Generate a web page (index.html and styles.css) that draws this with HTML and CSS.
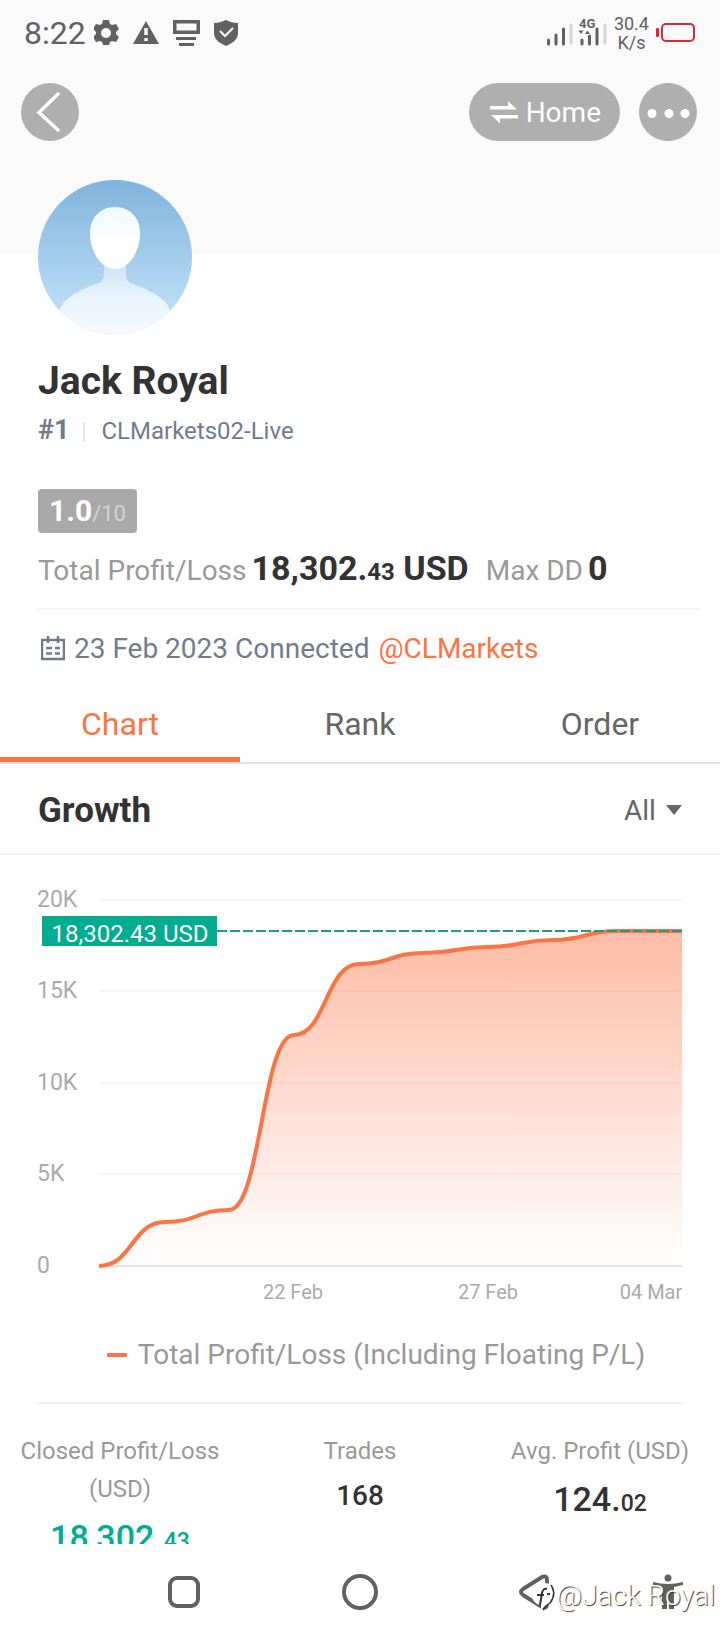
FILE: index.html
```html
<!DOCTYPE html>
<html lang="en">
  <head>
    <meta charset="utf-8">
    <meta name="viewport" content="width=device-width, initial-scale=1">
    <title>Jack Royal</title>
    <link rel="stylesheet" href="styles.css">
  </head>
  <body>
    <main class="screen">
      <header class="cover">
        <div class="status-bar">
          <span class="clock">8:22</span>
          <svg class="status-icons" width="146" height="28" viewBox="0 0 146 28">
            <g fill="#616161">
              <path fill-rule="evenodd" d="M9 1h6l1 4 2 1 4-1 3 5-3 3v2l3 3-3 5-4-1-2 1-1 3H9l-1-3-2-1-4 1-3-5 3-3v-2l-3-3 3-5 4 1 2-1zM12 9a4.500 4.500 0 1 0 0 10 4.500 4.500 0 0 0 0-10z"/>
              <path d="M52 2l13 23H39z"/>
              <path fill-rule="evenodd" d="M79 1h27v14H79zM82.500 4.500v7h20v-7z"/>
              <path d="M82 18h20v3H82zM85 24h15v3H85z"/>
              <path d="M132 1c4 2 8 3 12 3v10c0 6-5 10-12 13-7-3-12-7-12-13V4c4 0 8-1 12-3z"/>
            </g>
            <path d="M52 9v7M52 19v3" stroke="#fafafa" stroke-width="3.500"/>
            <path d="M126 12l5 5 8-8" fill="none" stroke="#fafafa" stroke-width="2"/>
          </svg>
          <svg class="signal" width="62" height="38" viewBox="0 -4 62 38">
            <path d="M3.500 22v4M11 17v9M18.500 11v15M37 22v4M44.500 18v8M52 11v15" stroke="#616161" stroke-width="3" stroke-linecap="round"/>
            <path d="M26 7v18M60 7v18" stroke="#d5d5d5" stroke-width="3" stroke-linecap="round"/>
            <path d="M33.500 12.500h5l-2.500 3.500zM40 16h5l-2.500-3.500z" fill="#616161"/>
            <text class="network" x="34" y="10">4G</text>
          </svg>
          <span class="speed">30.4<br>K/s</span>
          <svg width="40" height="20" viewBox="0 0 40 20">
            <rect x="6" y="1" width="32" height="17" rx="4" fill="none" stroke="#d92b31" stroke-width="2"/>
            <rect x="0" y="5" width="3" height="9" rx="1" fill="#e8202a"/>
          </svg>
        </div>
        <nav class="top-nav">
          <button class="pill round" aria-label="Back">
            <svg width="58" height="58" viewBox="0 0 58 58"><path d="M37 11L18 29.500 37 47" fill="none" stroke="#fff" stroke-width="3.500" stroke-linecap="round"/></svg>
          </button>
          <button class="pill home">
            <svg width="28" height="24" viewBox="0 0 28 24"><path d="M0 9.500V6h18V1l9 8.500zM28 15v3.500H10v5L1 15z" fill="#fff"/></svg>
            Home
          </button>
          <button class="pill round" aria-label="More">
            <svg width="58" height="58" viewBox="0 0 58 58" fill="#fff"><circle cx="13" cy="30.500" r="4.500"/><circle cx="30" cy="30.500" r="4.500"/><circle cx="46" cy="30.500" r="4.500"/></svg>
          </button>
        </nav>
      </header>

      <section class="profile">
        <svg class="avatar" width="154" height="154" viewBox="0 0 154 154">
          <defs>
            <linearGradient id="sky" x1="0" y1="0" x2="0" y2="1"><stop offset="0" stop-color="#80b3dc"/><stop offset="0.800" stop-color="#b9dcf4"/></linearGradient>
            <linearGradient id="face" x1="0" y1="0" x2="0" y2="1"><stop offset="0" stop-color="#eff9ff"/><stop offset="0.600" stop-color="#fff"/></linearGradient>
            <linearGradient id="body" x1="0" y1="0" x2="0" y2="1"><stop offset="0" stop-color="#cbe3f7"/><stop offset="0.500" stop-color="#e9f4fe"/><stop offset="1" stop-color="#f5faff"/></linearGradient>
            <clipPath id="disc"><circle cx="77" cy="77" r="77"/></clipPath>
          </defs>
          <g clip-path="url(#disc)">
            <path d="M0 0h154v154H0z" fill="url(#sky)"/>
            <path d="M66 82h22v10c0 8 1 10 7 12 22 8 36 17 37 28v22H21v-22c2-11 15-20 37-28 6-2 8-4 8-12z" fill="url(#body)"/>
            <path d="M77 27c15 0 25 11 25 26 0 20-12 36-25 36S52 73 52 53c0-15 10-26 25-26z" fill="url(#face)"/>
          </g>
        </svg>
        <h1 class="name">Jack Royal</h1>
        <p class="account"><b class="rank">#1</b><span class="server">CLMarkets02-Live</span></p>
        <p class="score"><b>1.0</b><small>/10</small></p>
        <p class="totals">
          <span>Total Profit/Loss</span>
          <b class="amount">18,302.<small>43</small> USD</b>
          <span class="drawdown">Max DD</span>
          <b class="amount">0</b>
        </p>
        <p class="connected">
          <svg width="24" height="26" viewBox="0 0 24 26" fill="none" stroke="#6f7b8a" stroke-width="2">
            <path d="M1 4h22v19H1z" stroke-width="2.500"/><path d="M7 0v7M17 0v7" stroke-width="2.500"/><path d="M5 12h6M14 12h5M5 17.500h6M14 17.500h5" stroke-width="2.500"/>
          </svg>
          <span>23 Feb 2023 Connected</span>
          <a href="#broker">@CLMarkets</a>
        </p>
      </section>

      <div class="tabs" role="tablist">
        <button class="tab active" role="tab" aria-selected="true">Chart</button>
        <button class="tab" role="tab" aria-selected="false">Rank</button>
        <button class="tab" role="tab" aria-selected="false">Order</button>
      </div>

      <section>
        <div class="chart-head">
          <h2>Growth</h2>
          <div class="period">
            <select aria-label="Period"><option>All</option></select>
            <svg width="16" height="10" viewBox="0 0 16 10"><path d="M0 0h16L8 10z" fill="#666"/></svg>
          </div>
        </div>
        <svg class="chart" viewBox="0 0 720 460" role="img" aria-label="Total profit/loss growth">
          <defs>
            <linearGradient id="fill" x1="0" y1="76" x2="0" y2="411" gradientUnits="userSpaceOnUse"><stop offset="0" stop-color="#fc7344" stop-opacity="0.480"/><stop offset="1" stop-color="#fc7344" stop-opacity="0"/></linearGradient>
          </defs>
          <path d="M100 45h582M100 136h582M100 228h582M100 319h582" stroke="#f6f6f6" stroke-width="2"/>
          <path d="M100 411h582" stroke="#e2e2e2" stroke-width="2"/>
          <path d="M100 411C132 411 132 367 165 367C197 367 197 355 229 355C261 355 262 180 294 180C326 180 326 109 359 109C391 109 391 98 423 98C456 98 456 92 488 92C520 92 520 85 553 85C585 85 585 76 617 76H682V411Z" fill="url(#fill)"/>
          <path d="M99 411C132 411 132 367 165 367C197 367 197 355 229 355C261 355 262 180 294 180C326 180 326 109 359 109C391 109 391 98 423 98C456 98 456 92 488 92C520 92 520 85 553 85C585 85 585 76 617 76H682" fill="none" stroke="#fc7344" stroke-width="4"/>
          <path d="M217 76h465" stroke="#1c9d7d" stroke-width="2" stroke-dasharray="10 3"/>
          <g class="y-axis">
            <text x="37" y="52">20K</text>
            <text x="37" y="143">15K</text>
            <text x="37" y="235">10K</text>
            <text x="37" y="326">5K</text>
            <text x="37" y="418">0</text>
          </g>
          <g class="x-axis">
            <text x="293" y="444">22 Feb</text>
            <text x="488" y="444">27 Feb</text>
            <text x="651" y="444">04 Mar</text>
          </g>
          <rect x="42" y="61" width="175" height="30" fill="#00ad8e"/>
          <text class="marker" x="130" y="87">18,302.43 USD</text>
        </svg>
        <p class="legend">Total Profit/Loss (Including Floating P/L)</p>
      </section>

      <dl class="stats">
        <div class="stat gain">
          <dt>Closed Profit/Loss (USD)</dt>
          <dd class="money">18,302.<small>43</small></dd>
        </div>
        <div class="stat">
          <dt>Trades</dt>
          <dd>168</dd>
        </div>
        <div class="stat">
          <dt>Avg. Profit (USD)</dt>
          <dd class="money">124.<small>02</small></dd>
        </div>
      </dl>
    </main>

    <footer class="system-nav">
      <button aria-label="Recent apps"><svg width="40" height="40" viewBox="0 0 40 40"><rect x="6" y="6" width="28" height="28" rx="7"/></svg></button>
      <button aria-label="Home screen"><svg width="40" height="40" viewBox="0 0 40 40"><circle cx="20" cy="20" r="16"/></svg></button>
      <button aria-label="Back"><svg width="40" height="40" viewBox="0 0 40 40"><path d="M7 17L26 5q5-2 5 3v24q0 5-5 3L7 23q-4-3 0-6z"/></svg></button>
      <button class="accessibility" aria-label="Accessibility"><svg width="32" height="36" viewBox="0 0 32 36"><circle cx="16" cy="4" r="3.500"/><path d="M1 8q15 4 30 0v3l-9 2v22h-5V25h-2v10h-5V13l-9-2z"/></svg></button>
      <div class="watermark">
        <svg width="24" height="30" viewBox="0 0 24 30">
          <path d="M12 2a11 11 0 1 1 2 22l-5 5v-5A11 11 0 0 1 12 2z" fill="#fff"/>
          <path d="M19 4q6 9-1 18l-4 3-3 4" fill="none" stroke="#333" stroke-width="1.500"/>
          <path d="M15 8q-4-1-5 4L8 24M5 14h7M15 13h3" fill="none" stroke="#333" stroke-width="2"/>
        </svg>
        @Jack Royal
      </div>
    </footer>
  </body>
</html>
```

FILE: styles.css
```css
html, body {
  height: 100%;
  margin: 0;
}

body {
  display: flex;
  flex-direction: column;
  background: #fff;
  color: #333;
  font-family: Roboto, "Liberation Sans", sans-serif;
  font-size: 28px;
}

h1, h2, p, dl, dd {
  margin: 0;
}

small {
  line-height: 1;
}

button, select {
  margin: 0;
  padding: 0;
  border: 0;
  background: none;
  color: inherit;
  font: inherit;
}

svg {
  display: block;
  flex: none;
}

/* everything above the system bar, cut off where it starts */
.screen {
  flex: 1;
  min-height: 0;
  overflow: hidden;
}

.cover {
  padding-bottom: 113px;
  background: #fafafa;
}

.status-bar {
  display: flex;
  align-items: center;
  height: 66px;
  padding: 0 24px;
  color: #616161;
}

.clock {
  font-size: 32px;
}

.status-icons {
  margin-left: 8px;
}

.signal {
  margin-left: auto;
}

.network {
  font-size: 13px;
  font-weight: bold;
  fill: #616161;
}

.speed {
  margin: 0 7px;
  font-size: 18px;
  line-height: 19px;
  text-align: center;
}

.top-nav {
  display: flex;
  gap: 19px;
  padding: 17px 23px 0 21px;
}

.pill {
  height: 58px;
  border-radius: 29px;
  background: #afafaf;
  color: #fff;
}

.round {
  width: 58px;
}

.home {
  display: flex;
  align-items: center;
  gap: 8px;
  margin-left: auto;
  padding: 0 19px 0 21px;
}

.profile {
  padding: 0 20px 0 38px;
}

.avatar {
  position: relative;
  margin-top: -74px;
}

.name {
  margin-top: 23px;
  font-size: 39px;
  line-height: 48px;
}

.account {
  display: flex;
  align-items: baseline;
  margin-top: 9px;
  color: #717d8c;
  line-height: 32px;
}

.rank {
  font-size: 27px;
}

.server {
  margin-left: 14px;
  padding-left: 18px;
  background: linear-gradient(#e8e8e8, #e8e8e8) 0 60% / 2px 20px no-repeat;
  font-size: 24px;
}

.score {
  width: fit-content;
  margin-top: 42px;
  padding: 0 11px;
  border-radius: 4px;
  background: #a9a9a9;
  color: #fff;
  font-size: 30px;
  line-height: 44px;
}

.score small {
  color: #d4d4d4;
  font-size: 22px;
}

.totals {
  display: flex;
  align-items: baseline;
  gap: 5px;
  margin-top: 13px;
  padding-bottom: 18px;
  border-bottom: 2px solid #f5f5f5;
  color: #999;
  line-height: 36px;
}

.amount {
  color: #333;
  font-size: 34px;
  line-height: 44px;
}

.amount small {
  font-size: 24px;
}

.drawdown {
  margin-left: 12px;
}

.connected {
  display: flex;
  align-items: center;
  gap: 9px;
  margin-top: 19px;
  padding-left: 3px;
  color: #717d8c;
  line-height: 40px;
}

.connected a {
  color: #fc7344;
  text-decoration: none;
}

.tabs {
  display: grid;
  grid-template-columns: repeat(3, 1fr);
  padding-top: 35px;
  border-bottom: 2px solid #e4e4e4;
}

.tab {
  padding-bottom: 13px;
  border-bottom: 5px solid transparent;
  color: #666;
  font-size: 32px;
  line-height: 40px;
}

.active {
  border-color: #fc7344;
  color: #fc7344;
}

.chart-head {
  display: flex;
  align-items: center;
  justify-content: space-between;
  height: 86px;
  padding: 3px 38px 0;
  border-bottom: 2px solid #f2f2f2;
}

.chart-head h2 {
  font-size: 35px;
}

.period {
  display: flex;
  align-items: center;
  gap: 10px;
  color: #666;
}

.period select {
  appearance: none;
}

.chart {
  width: 100%;
}

.y-axis {
  fill: #aaa;
  font-size: 23px;
}

.x-axis {
  fill: #aaa;
  font-size: 20px;
  text-anchor: middle;
}

.marker {
  fill: #fff;
  font-size: 24px;
  text-anchor: middle;
}

.legend {
  display: flex;
  align-items: center;
  justify-content: center;
  gap: 11px;
  margin: 20px 38px 0;
  padding: 0 0 27px 32px;
  border-bottom: 2px solid #f2f2f2;
  color: #999;
  line-height: 40px;
}

.legend::before {
  content: "";
  width: 20px;
  height: 4px;
  border-radius: 1px;
  background: #fc7344;
}

.stats {
  display: grid;
  grid-template-columns: repeat(3, 1fr);
  padding-top: 28px;
  text-align: center;
}

.stat dt {
  color: #999;
  font-size: 24px;
  line-height: 38px;
}

.stat dd {
  font-size: 28px;
  font-weight: 500;
  line-height: 52px;
}

.stat .money {
  font-size: 34px;
  line-height: 58px;
}

.stat small {
  font-size: 23px;
}

.gain dd {
  color: #00ad8e;
}

.system-nav {
  position: relative;
  display: grid;
  grid-template-columns: 2fr 2fr 2fr 1fr;
  align-items: center;
  flex: none;
  height: 96px;
  padding: 0 8px 0 96px;
  background: #fff;
}

.system-nav button {
  display: flex;
  justify-content: center;
}

.system-nav button svg {
  fill: none;
  stroke: #616161;
  stroke-width: 4px;
}

.system-nav .accessibility svg {
  fill: #616161;
  stroke: none;
}

.watermark {
  position: absolute;
  right: 5px;
  bottom: 28px;
  display: flex;
  align-items: center;
  color: #fff;
  font-size: 28px;
  font-weight: 300;
  text-shadow: 1px 1px 1px #333;
}
```
